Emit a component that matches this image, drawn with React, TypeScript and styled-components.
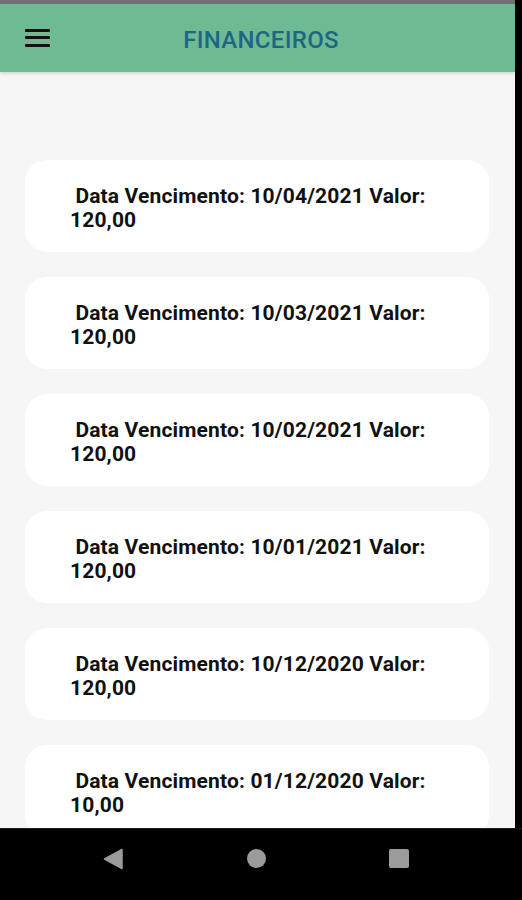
import styled, { createGlobalStyle } from 'styled-components'

const GlobalStyle = createGlobalStyle`
    html, body {
        margin: 0;
        padding: 0;
        background: #000;
    }
    * {
        box-sizing: border-box;
    }
`

interface Parcela {
    vencimento: string
    valor: string
}

const parcelas: Parcela[] = [
    { vencimento: '10/04/2021', valor: '120,00' },
    { vencimento: '10/03/2021', valor: '120,00' },
    { vencimento: '10/02/2021', valor: '120,00' },
    { vencimento: '10/01/2021', valor: '120,00' },
    { vencimento: '10/12/2020', valor: '120,00' },
    { vencimento: '01/12/2020', valor: '10,00' },
]

export default function App() {
    return (
        <>
            <GlobalStyle />
            <Frame>
                <Screen>
                    <StatusStrip />
                    <Header>
                        <MenuButton aria-label="menu">
                            <MenuLine />
                            <MenuLine />
                            <MenuLine />
                        </MenuButton>
                        <Title>FINANCEIROS</Title>
                    </Header>
                    <Content>
                        {parcelas.map((p, i) => (
                            <Card key={i}>
                                <CardText>
                                    {'\u00a0'}Data Vencimento: {p.vencimento} Valor: {p.valor}
                                </CardText>
                            </Card>
                        ))}
                    </Content>
                </Screen>
                <NavBar>
                    <svg width="20" height="22" viewBox="0 0 20 22">
                        <path d="M19 1.5 L19 20.5 L1.5 11 Z" fill="#9b9b9b" stroke="#9b9b9b" strokeWidth="1.5" strokeLinejoin="round" />
                    </svg>
                    <HomeDot />
                    <RecentSquare />
                </NavBar>
            </Frame>
        </>
    )
}


/*___Styling___*/

const Frame = styled.div`
    width: 522px;
    height: 900px;
    background: #000;
    display: flex;
    flex-direction: column;
    overflow: hidden;
    font-family: Roboto, 'Liberation Sans', sans-serif;
`

const Screen = styled.div`
    width: 515px;
    height: 828px;
    display: flex;
    flex-direction: column;
    background: #f6f6f6;
    overflow: hidden;
`

const StatusStrip = styled.div`
    height: 4px;
    background: #6f7070;
    flex-shrink: 0;
`

const Header = styled.header`
    height: 68px;
    flex-shrink: 0;
    background: #6ebb93;
    box-shadow: 0 2px 3px rgba(0, 0, 0, 0.12);
    display: flex;
    align-items: center;
    position: relative;
    z-index: 1;
`

const MenuButton = styled.div`
    width: 25px;
    margin-left: 25px;
    display: flex;
    flex-direction: column;
    gap: 4.5px;
    margin-top: -1px;
`

const MenuLine = styled.span`
    display: block;
    height: 3px;
    border-radius: 1px;
    background: #111;
`

const Title = styled.h1`
    flex: 1;
    margin: 3px 43px 0 0;
    text-align: center;
    font-size: 24px;
    font-weight: 500;
    color: #1d6783;
    letter-spacing: 0.3px;
`

const Content = styled.main`
    flex: 1;
    padding: 88px 26px 0 25px;
    display: flex;
    flex-direction: column;
    gap: 25px;
`

const Card = styled.div`
    flex-shrink: 0;
    height: 92px;
    background: #fff;
    border-radius: 22px;
    padding: 24px 40px 0 45px;
`

const CardText = styled.p`
    margin: 0;
    font-size: 21px;
    line-height: 24px;
    font-weight: 700;
    letter-spacing: 0.15px;
    color: #111;
`

const NavBar = styled.nav`
    flex: 1;
    border-top: 1px solid #1a1a1a;
    display: flex;
    align-items: center;
    padding: 0 113px 12px 103px;
    justify-content: space-between;
`

const HomeDot = styled.span`
    width: 19px;
    height: 19px;
    border-radius: 50%;
    background: #9b9b9b;
`

const RecentSquare = styled.span`
    width: 20px;
    height: 19px;
    border-radius: 2px;
    background: #9b9b9b;
`
